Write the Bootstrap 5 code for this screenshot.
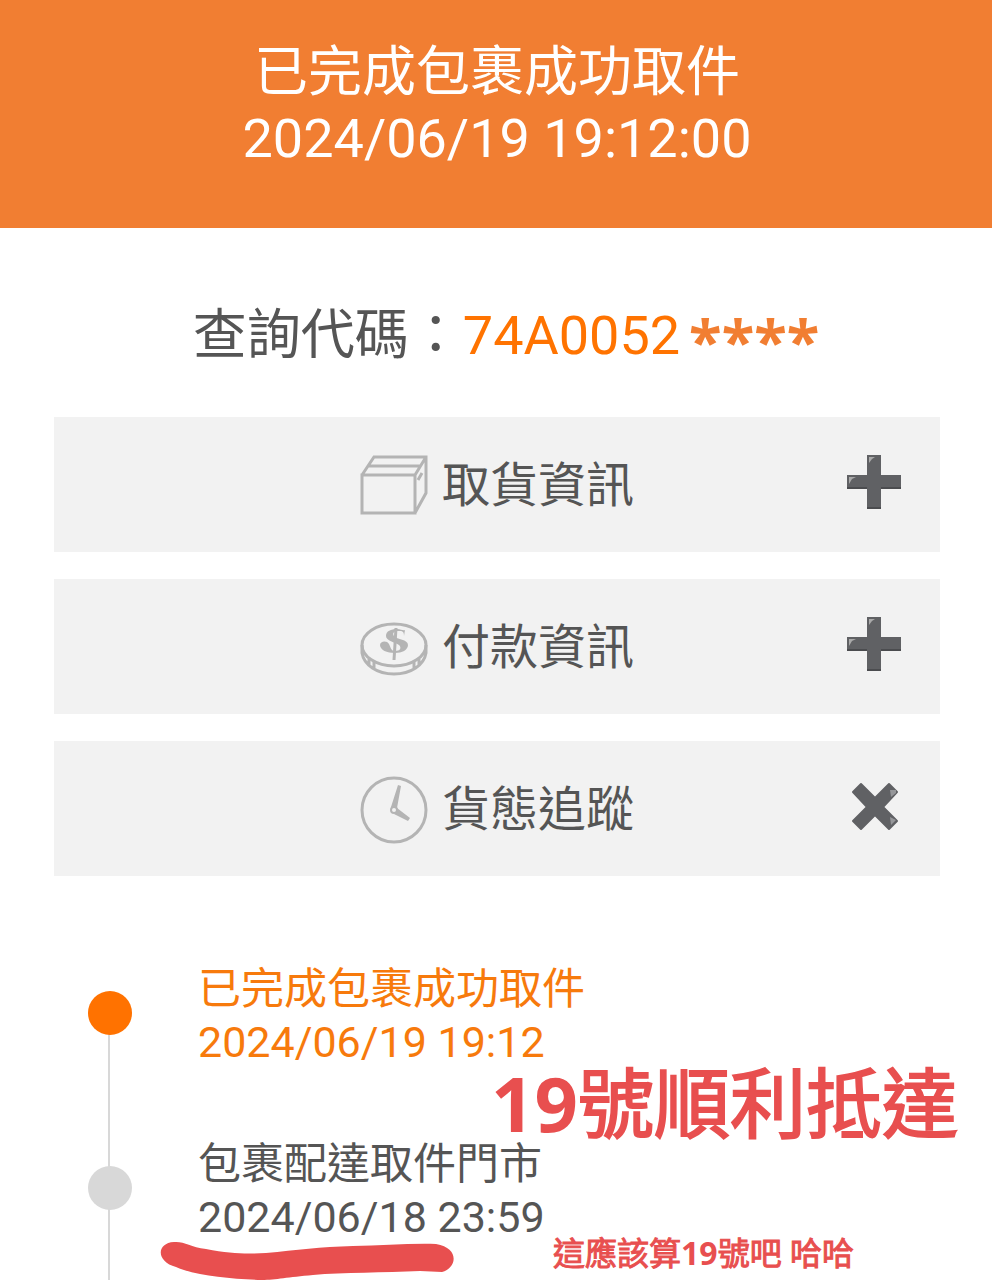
<!DOCTYPE html>
<html lang="zh-Hant">
<head>
<meta charset="utf-8">
<meta name="viewport" content="width=device-width, initial-scale=1">
<title>已完成包裹成功取件</title>
<link href="https://cdn.jsdelivr.net/npm/bootstrap@5.3.0/dist/css/bootstrap.min.css" rel="stylesheet">
<style>
  body { font-family: Roboto, "Noto Sans CJK TC", sans-serif; color: #555; background: #fff; }
  .status-banner { background: #f17e32; color: #fff; padding: 40px 14px 56px 16px; }
  .status-banner h1 { font-size: 54px; line-height: 66px; font-weight: 400; }
  .track-page { padding: 0 52px 0 54px; }
  .query-line { font-size: 54px; line-height: 68px; padding: 74px 0 47px 18px; }
  .query-code { color: #ff7300; }
  .stars { font-family: "Noto Sans", "Noto Sans CJK TC", sans-serif; font-weight: 700; color: #f17e32; font-size: 60px; line-height: 40px; vertical-align: -9px; margin-left: 9px; }
  .panel-list { gap: 27px; }
  .panel-btn { background: #f2f2f2; color: #555; border: 0; border-radius: 0; font-size: 48px; line-height: 60px; padding: 39px 40px 36px; gap: 14px; position: relative; }
  .panel-btn:hover { background: #ebebeb; color: #555; }
  .panel-icon { width: 68px; height: 68px; margin: -4px 0; fill: none; stroke: #b4b4b4; stroke-width: 3; }
  .panel-mark { position: absolute; right: 38px; top: 37px; width: 56px; height: 56px; }
  .timeline { padding-top: 83px; }
  .step { position: relative; padding: 4px 0 0 144px; height: 175px; font-size: 43px; line-height: 53px; }
  .step.active { color: #f77a0c; }
  .step::before { content: ""; position: absolute; left: 54px; top: 54px; bottom: -54px; width: 2px; background: #d8d8d8; }
  .step:last-child { height: 147px; }
  .step:last-child::before { bottom: 0; }
  .dot { position: absolute; left: 34px; top: 32px; width: 44px; height: 44px; background: #d8d8d8; }
  .active .dot { background: #ff7200; }
  .note { position: absolute; color: #e84f4f; font-family: "Noto Sans", "Noto Sans CJK TC", sans-serif; font-weight: 400; white-space: nowrap; -webkit-text-stroke: 1px #e84f4f; }
  .note b { font-weight: 700; -webkit-text-stroke: 0; }
  .note-big { right: -18px; top: 94px; font-size: 76px; line-height: 100px; -webkit-text-stroke-width: 2px; }
  .note-small { right: 86px; top: 99px; font-size: 32px; line-height: 40px; }
  .scribble { position: absolute; left: 106px; top: 103px; width: 296px; height: 44px; }
</style>
</head>
<body>
<header class="status-banner text-center">
  <h1 class="m-0">已完成包裹成功取件<br>2024/06/19 19:12:00</h1>
</header>
<main class="track-page">
  <p class="query-line text-center m-0">查詢代碼：<span class="query-code">74A0052</span><span class="stars">****</span></p>
  <div class="panel-list d-flex flex-column">
    <button type="button" class="panel-btn btn d-flex justify-content-center align-items-center">
      <svg class="panel-icon" viewBox="0 0 68 68" aria-hidden="true"><path d="M2 23H55V61H2ZM2 23L14 5H66V41L55 61M55 23L66 5M8 14H60M62 21L58 28"/></svg>
      <span>取貨資訊</span>
      <svg class="panel-mark" viewBox="0 0 56 56" aria-hidden="true"><path fill="#606164" d="M21 1H35V21H55V35H35V55H21V35H1V21H21Z"/><path fill="#4b4c4f" d="M21 53H35V55H21ZM1 33H21V35H1ZM35 33H55V35H35Z"/><path fill="#aaa" d="M23 3H29L26 5L23 9ZM3 23H10L6 25L3 30Z"/></svg>
    </button>
    <button type="button" class="panel-btn btn d-flex justify-content-center align-items-center">
      <svg class="panel-icon" viewBox="0 0 68 68" aria-hidden="true"><ellipse cx="34" cy="31" rx="32" ry="21"/><path d="M2 31V39C4 51 17 60 34 60S64 51 66 39V31M9 45V52M14 48V55M54 48V55M59 45V52"/><path d="M36 14L34 46"/><path fill="#b4b4b4" stroke="none" d="M44 22C44 17 42 17 39 17C34 17 32 19 34 22C37 26 48 25 48 31C48 36 42 39 35 39C27 39 20 36 20 31C20 27 27 26 29 30C31 34 31 37 35 37C40 37 42 34 39 31C35 28 26 27 26 22C26 17 31 15 37 15C41 15 43 17 45 16Z"/></svg>
      <span>付款資訊</span>
      <svg class="panel-mark" viewBox="0 0 56 56" aria-hidden="true"><path fill="#606164" d="M21 1H35V21H55V35H35V55H21V35H1V21H21Z"/><path fill="#4b4c4f" d="M21 53H35V55H21ZM1 33H21V35H1ZM35 33H55V35H35Z"/><path fill="#aaa" d="M23 3H29L26 5L23 9ZM3 23H10L6 25L3 30Z"/></svg>
    </button>
    <button type="button" class="panel-btn btn d-flex justify-content-center align-items-center" aria-expanded="true">
      <svg class="panel-icon" viewBox="0 0 68 68" aria-hidden="true"><circle cx="34" cy="34" r="32"/><path fill="#b4b4b4" stroke="none" d="M31 31L38 9L41 10L37 32L50 42L48 45L34 38L37 34Z"/><circle cx="34" cy="34" r="3" fill="#f2f2f2" stroke-width="2"/></svg>
      <span>貨態追蹤</span>
      <svg class="panel-mark" viewBox="0 0 56 56" aria-hidden="true"><path fill="#606164" stroke="#606164" stroke-width="2" stroke-linejoin="round" d="M15 6L29 20L43 6L51 14L37 29L51 43L43 51L29 37L15 51L7 43L21 29L7 14Z"/><path fill="#96979a" d="M44 12H50V15L45 19ZM44 39L50 42L45 47Z"/></svg>
    </button>
  </div>
  <section class="timeline">
    <div class="step active">
      <span class="dot rounded-circle"></span>
      <div>已完成包裹成功取件</div>
      <div>2024/06/19 19:12</div>
      <div class="note note-big"><b>19</b>號順利抵達</div>
    </div>
    <div class="step">
      <span class="dot rounded-circle"></span>
      <div>包裹配達取件門市</div>
      <div>2024/06/18 23:59</div>
      <svg class="scribble" viewBox="0 0 296 44" aria-hidden="true"><path fill="#e84f4f" d="M14 5C24 4 30 10 46 12C72 17 87 17 106 16C137 13 160 10 193 9C222 9 250 6 276 7C300 11 297 31 282 35L260 34C224 36 183 35 153 38C128 40 116 43 102 43C71 42 37 39 16 30C-4 25-4 6 14 5Z"/></svg>
      <div class="note note-small">這應該算<b>19</b>號吧 哈哈</div>
    </div>
  </section>
</main>
<script src="https://cdn.jsdelivr.net/npm/bootstrap@5.3.0/dist/js/bootstrap.bundle.min.js"></script>
</body>
</html>
